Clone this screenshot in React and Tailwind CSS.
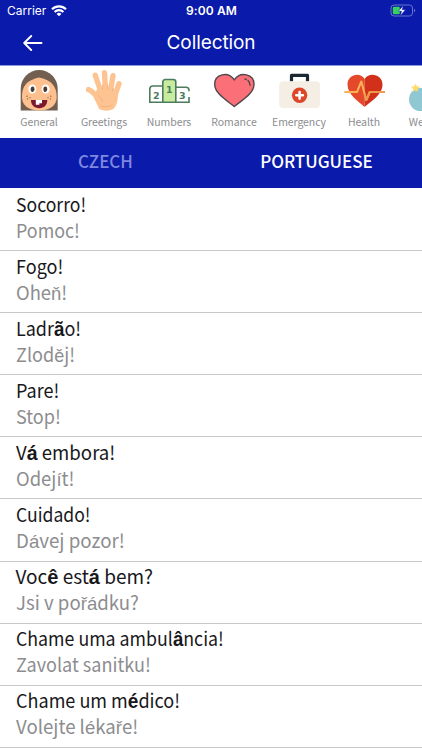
const svg = 'block h-[44px] w-[44px] shrink-0';

const General = () => (
  <svg viewBox="0 0 44 44" className={svg}>
    <path d="M3.7 42.5V20.5a18.5 18.5 0 0 1 37 0v22z" fill="#725f50" />
    <path d="M5 29c0-9 3-16.500 17.3-19.5C36 12.500 39.700 20 39.700 29c0 8-6 13.5-17.4 13.5S5 37 5 29z" fill="#fdc08e" />
    <ellipse cx="15.3" cy="21" rx="4" ry="4.6" fill="#fff" />
    <ellipse cx="28.6" cy="21" rx="4" ry="4.6" fill="#fff" />
    <ellipse cx="15.6" cy="21.2" rx="1.900" ry="2.8" fill="#4e3c34" />
    <ellipse cx="28.3" cy="21.2" rx="1.900" ry="2.8" fill="#4e3c34" />
    <path d="M14 32h16.3c0 5-3.3 8.2-8.1 8.2S14 37 14 32z" fill="#7d1831" />
    <path d="M18.8 32h6.2v3.200h-2.600v1.600h-3.600z" fill="#fff" />
    <g fill="#9d6b4b"><circle cx="10" cy="28.3" r=".8" /><circle cx="13" cy="29.7" r=".7" /><circle cx="10.5" cy="31" r=".7" /><circle cx="33.8" cy="28.3" r=".8" /><circle cx="31" cy="29.7" r=".7" /><circle cx="33.5" cy="31" r=".7" /></g>
  </svg>
);
const Greetings = () => (
  <svg viewBox="0 0 44 44" className={svg}>
    <g stroke="#fdc492" strokeWidth="5.400" strokeLinecap="round" fill="none">
      <path d="M6.6 21.6c4 1 5.500 5 11 9.500" /><path d="M13.300 7.300L19 24" /><path d="M22.500 4.800L23.500 22" /><path d="M31 7.700L28.300 24" /><path d="M37 15.700L32.500 29" />
    </g>
    <path d="M15.500 20h15.500l4.700 5.500c.5 7-1 12-4.200 15.500q-7 3.500-14.500 0c-1-4-4-8-5.500-12z" fill="#fdc492" />
    <path d="M20.700 17v4M25.800 17v4M31 20.500l-.7 2.500M16.500 28c3.500 1.500 4 4 3.500 6M19 38c4 1.300 8 .8 11-.8" stroke="#f3ae80" strokeWidth=".9" fill="none" strokeLinecap="round" />
  </svg>
);
const Numbers = () => (
  <svg viewBox="0 0 44 44" className={svg}>
    <path d="M16 34V13.500a2 2 0 0 1 2-2h8.500a2 2 0 0 1 2 2V34z" fill="#c7ec9e" />
    <path d="M15.800 34.200V14a2.500 2.500 0 0 1 2.500-2.500h8a2.500 2.500 0 0 1 2.500 2.500v20.200zM15.800 18H6a3.200 3.200 0 0 0-3.200 3.200v13h13M28.800 19.300h10.200q3 0 3 3v1M42 29v5.200H28.800" fill="none" stroke="#4c7b5d" strokeWidth="1.6" />
    <g fill="#4c7b5d" fontFamily="DejaVu Sans, sans-serif" fontWeight="700" fontSize="9.500" textAnchor="middle"><text x="9.400" y="31">2</text><text x="22.300" y="25.300">1</text><text x="35.300" y="31">3</text></g>
  </svg>
);
const Romance = () => (
  <svg viewBox="0 0 44 44" className={svg}>
    <path d="M22.300 38.600C16 33 2.700 26 2.700 16.200 2.700 6.200 16 2.800 22.300 11.800 28.600 2.800 42 6.200 42 16.200 42 26 28.600 33 22.300 38.600z" fill="#fb7078" stroke="#50484a" strokeWidth="1.400" />
    <path d="M33 11l1.300.5M36 12.500c1.200 1.200 2 2.700 2.100 4.700" stroke="#50484a" strokeWidth="1.400" fill="none" strokeLinecap="round" />
  </svg>
);
const Emergency = () => (
  <svg viewBox="0 0 44 44" className={svg}>
    <path d="M14.500 13.500V7.300h16v6.200" fill="none" stroke="#1d2932" strokeWidth="3.200" strokeLinejoin="round" />
    <rect x="2.200" y="13.300" width="40.800" height="26.700" rx="4" fill="#f5eee4" />
    <circle cx="22.600" cy="27.300" r="7.700" fill="#dc4629" />
    <path d="M22.600 24v6.600M19.300 27.300h6.600" stroke="#fff" strokeWidth="2.600" strokeLinecap="round" />
  </svg>
);
const Health = () => (
  <svg viewBox="0 0 44 44" className={svg}>
    <path d="M22.600 39C17 33.500 5.500 27 5.500 16.500c0-10 12.500-13 17.100-5.500z" fill="#e5492b" />
    <path d="M22.600 39C28.500 33.500 40.500 27 40.500 16.500c0-10-13-13-17.900-5.500z" fill="#d1301a" />
    <path d="M2.300 24H15l4.300-10.500L24.300 32l3.500-8H43" fill="none" stroke="#f8b254" strokeWidth="2" strokeLinejoin="round" />
    <path d="M22.600 26l1.700 6 3.500-8H43" fill="none" stroke="#ee9a4c" strokeWidth="2" strokeLinejoin="round" />
  </svg>
);
const Weather = () => (
  <svg viewBox="0 0 44 44" className={svg}>
    <circle cx="13.500" cy="31.500" r="11.500" fill="#8fc7d3" />
    <path d="M8.500 15.700l1.300 2.500 3.200.5-2.300 2 .6 3-2.800-1.200-2.800 1.200.6-3-2.300-2 3.200-.5z" fill="#fddc6a" />
  </svg>
);

const categories = [
  ['General', General], ['Greetings', Greetings], ['Numbers', Numbers],
  ['Romance', Romance], ['Emergency', Emergency], ['Health', Health], ['Weather', Weather],
];

const phrases = [
  ['Socorro!', 'scale-x-[0.925]', 'Pomoc!', 'scale-x-[0.94]'],
  ['Fogo!', 'scale-x-[0.95]', 'Oheň!', 'scale-x-[0.97]'],
  ['Ladrão!', 'scale-x-[0.945]', 'Zloděj!', 'scale-x-[0.95]'],
  ['Pare!', 'scale-x-[0.95]', 'Stop!', 'scale-x-[0.95]'],
  ['Vá embora!', 'scale-x-[0.98]', 'Odejít!', 'scale-x-[0.97]'],
  ['Cuidado!', 'scale-x-[0.925]', 'Dávej pozor!', 'scale-x-[0.985]'],
  ['Você está bem?', 'scale-x-100', 'Jsi v pořádku?', 'scale-x-[0.98]'],
  ['Chame uma ambulância!', 'scale-x-[0.935]', 'Zavolat sanitku!', 'scale-x-[0.95]'],
  ['Chame um médico!', 'scale-x-[0.95]', 'Volejte lékaře!', 'scale-x-[0.98]'],
];

const Phrase = ({ text, accent }) =>
  text.split(/([áãâêéěňřží])/).map((part, i) => (i % 2 ? <span key={i} className={accent}>{part}</span> : part));

export default function App() {
  return (
    <div className="h-[750px] w-[422px] overflow-hidden bg-white font-['Noto_Sans_CJK_SC','Noto_Sans',sans-serif]">
      <header className="h-[65px] bg-[#0a1aab] font-[Inter,sans-serif] text-white">
        <div className="grid h-[22px] grid-cols-3 items-center pl-[7px] pr-[6px] text-[12px] leading-none">
          <div className="flex items-center gap-[5px]">
            <span>Carrier</span>
            <svg viewBox="0 0 16 12" className="-mt-[1px] h-[12px] w-[16px]" fill="none" stroke="#fff" strokeWidth="2.100">
              <path d="M1 4.200a10 10 0 0 1 14 0M3.600 7a6.200 6.200 0 0 1 8.800 0" /><path d="M8 11.300L5.600 8.900a3.500 3.500 0 0 1 4.800 0z" fill="#fff" stroke="none" />
            </svg>
          </div>
          <span className="text-center font-semibold tracking-[0.1px]">9:00 AM</span>
          <svg viewBox="0 0 26 13" className="-mt-[1px] h-[13px] w-[26px] justify-self-end">
            <rect x="1" y="1" width="21.500" height="11" rx="3" fill="none" stroke="#6974cd" />
            <rect x="2.800" y="2.800" width="7" height="7.400" rx="1.200" fill="#35d15c" />
            <path d="M24 4.800v3.400q1.200-.5 1.200-1.700T24 4.800z" fill="#6974cd" />
            <path d="M13.300 1.500L8.300 7.200h3.200l-1.200 4.500 5.200-6h-3.300z" fill="#fff" stroke="#0a1aab" strokeWidth=".5" />
          </svg>
        </div>
        <div className="grid h-[41px] grid-cols-[60px_1fr_60px] items-center">
          <svg viewBox="0 0 20 16" className="ml-[23px] h-[16px] w-[20px]" fill="none" stroke="#fff" strokeWidth="1.900" strokeLinecap="round" strokeLinejoin="round"><path d="M18.500 8H1.200M8.200 1L1.200 8l7 7" /></svg>
          <h1 className="text-center text-[19px] font-normal leading-none tracking-[-0.1px]">Collection</h1>
        </div>
      </header>
      <nav className="flex h-[73px] overflow-hidden border-t border-[#8e96dc] bg-white pl-[6px] pt-[2px]">
        {categories.map(([name, Icon]) => (
          <div key={name} className="flex w-[65px] shrink-0 flex-col items-center">
            <Icon />
            <span className="mt-[3px] pl-[1px] text-[10.5px] leading-[14px] tracking-[-0.08px] text-[#8d8d90]">{name}</span>
          </div>
        ))}
      </nav>
      <div className="grid h-[50px] grid-cols-2 items-center bg-[#0a1aab] pb-[6px] text-center text-[17px] font-medium leading-none">
        <span className="text-[#7f88e0]">CZECH</span>
        <span className="text-white">PORTUGUESE</span>
      </div>
      <main className="pt-[1px]">
        {phrases.map(([pt, ptScale, cs, csScale]) => (
          <div key={pt} className="flex h-[62.1px] flex-col border-b-[1.3px] border-[#c9c9cb] pl-[15.500px] pt-[1.6px] text-[19px] leading-[26px]">
            <div className={`h-[26px] origin-left whitespace-nowrap text-[#18181b] ${ptScale}`}><Phrase text={pt} accent="font-['Liberation_Sans'] text-[20px] font-bold leading-none" /></div>
            <div className={`h-[26px] origin-left whitespace-nowrap text-[#8d8d90] ${csScale}`}><Phrase text={cs} accent="font-['Liberation_Sans'] leading-none" /></div>
          </div>
        ))}
      </main>
    </div>
  );
}
